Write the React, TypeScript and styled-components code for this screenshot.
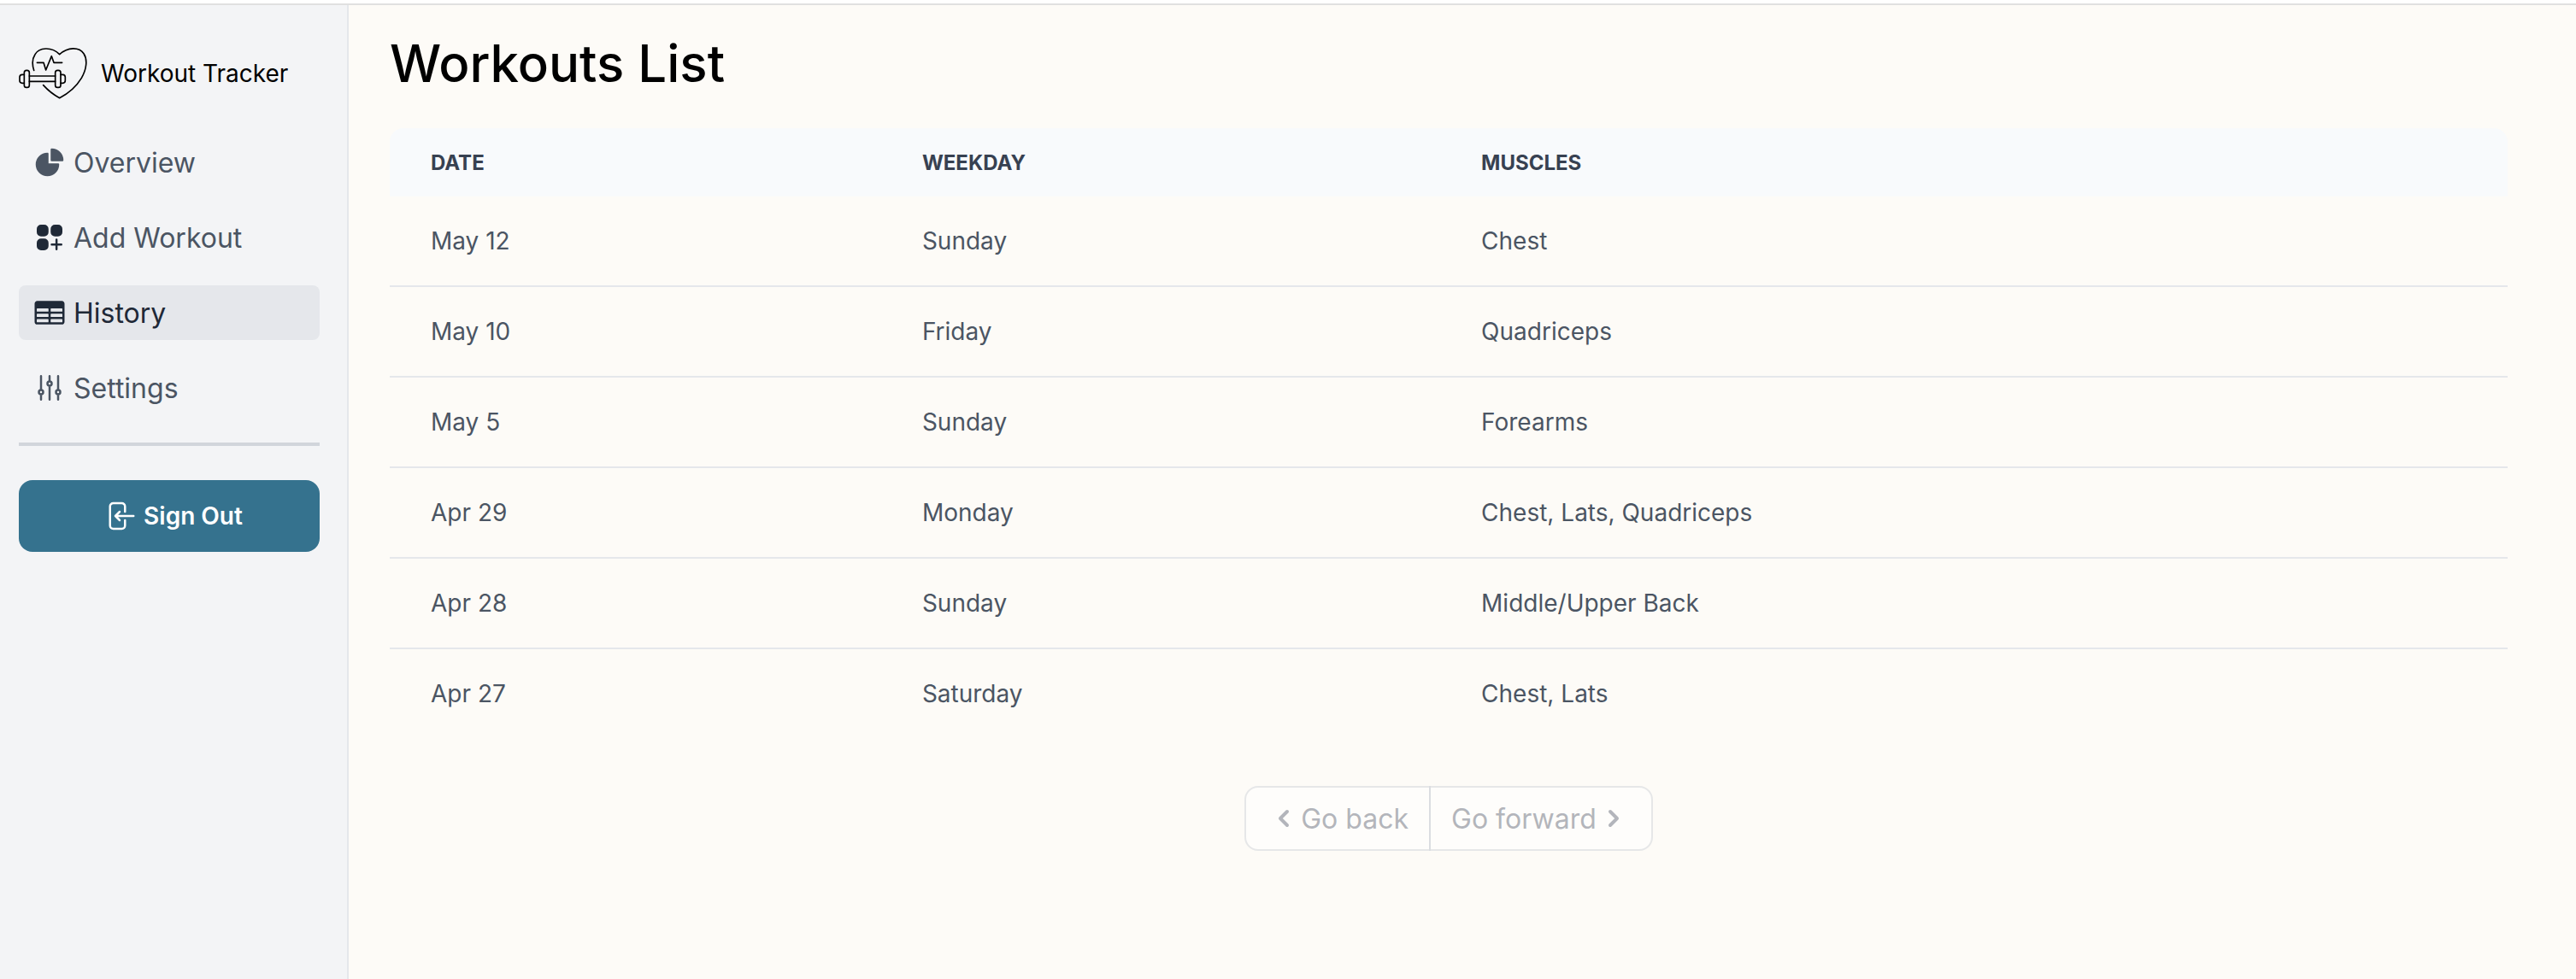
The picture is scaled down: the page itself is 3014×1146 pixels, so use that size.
import React from 'react';
import styled, { createGlobalStyle } from 'styled-components';
import { HiChevronLeft, HiChevronRight } from 'react-icons/hi';
import {
  HiChartPie,
  HiOutlineAdjustmentsVertical,
  HiOutlineArrowLeftOnRectangle,
  HiSquaresPlus,
  HiTableCells,
} from 'react-icons/hi2';

const GlobalStyle = createGlobalStyle`
  *, *::before, *::after { box-sizing: border-box; }
  body {
    margin: 0;
    background: #fdfbf7;
    font-family: Inter, 'Liberation Sans', sans-serif;
    color: #000;
  }
`;

const Page = styled.div`
  display: flex;
  flex-direction: column;
  min-height: 100vh;
`;

const TopBar = styled.header`
  height: 6px;
  background: #fff;
  border-bottom: 2px solid #e0e0e0;
`;

const Body = styled.div`
  display: flex;
  flex: 1;
`;

const Sidebar = styled.aside`
  flex: 0 0 408px;
  padding: 50px 32px 32px 22px;
  background: #f3f4f6;
  border-right: 2px solid #e5e7eb;
`;

const Brand = styled.a`
  display: flex;
  align-items: center;
  gap: 16px;
  height: 60px;
  margin-bottom: 42px;
  color: #000;
  font-size: 28px;
  text-decoration: none;
`;

const NavList = styled.ul`
  display: flex;
  flex-direction: column;
  gap: 24px;
  margin: 0;
  padding: 0;
  list-style: none;
`;

const NavLink = styled.a<{ $active?: boolean; $iconColor?: string }>`
  display: flex;
  align-items: center;
  gap: 8px;
  height: 64px;
  padding: 0 16px;
  border-radius: 8px;
  background: ${(p) => (p.$active ? '#e5e7eb' : 'transparent')};
  color: ${(p) => (p.$active ? '#1f2937' : '#4b5563')};
  font-size: 32px;
  text-decoration: none;

  svg {
    flex: none;
    width: 40px;
    height: 40px;
    color: ${(p) => p.$iconColor ?? 'inherit'};
  }
`;

const Divider = styled.hr`
  height: 4px;
  margin: 32px 0 40px;
  border: 0;
  background: #d1d5db;
`;

const SignOutButton = styled.button`
  display: flex;
  align-items: center;
  justify-content: center;
  width: 100%;
  height: 84px;
  padding: 0;
  border: 0;
  border-radius: 16px;
  background: #35728e;
  color: #fff;
  font: 600 28px Inter, 'Liberation Sans', sans-serif;
  cursor: pointer;

  svg {
    width: 40px;
    height: 40px;
    margin: 0 8px;
  }
`;

const Main = styled.main`
  flex: 1;
  min-width: 0;
  padding: 38px 80px 48px 48px;
`;

const Title = styled.h1`
  margin: 0 0 46px;
  font-size: 60px;
  font-weight: 500;
  line-height: 60px;
`;

const WorkoutTable = styled.table`
  width: 100%;
  table-layout: fixed;
  border-collapse: separate;
  border-spacing: 0;
  text-align: left;
`;

const HeadCell = styled.th<{ $share: number }>`
  width: ${(p) => p.$share}%;
  height: 80px;
  padding: 0 48px;
  background: #f8fafc;
  color: #374151;
  font-size: 24px;
  font-weight: 700;
  text-transform: uppercase;

  &:first-child { border-top-left-radius: 16px; }
  &:last-child { border-top-right-radius: 16px; }
`;

const Row = styled.tr`
  &:not(:last-child) td {
    height: 106px;
    border-bottom: 2px solid #e5e7eb;
  }
`;

const Cell = styled.td`
  height: 104px;
  padding: 0 48px;
  color: #4b5563;
  font-size: 28px;
`;

const Pagination = styled.nav`
  display: flex;
  justify-content: center;
  margin-top: 56px;
`;

const PageButton = styled.button`
  display: flex;
  align-items: center;
  height: 76px;
  padding: 0 24px;
  border: 2px solid #d1d5db;
  background: #fff;
  color: #6b7280;
  font: 400 32px Inter, 'Liberation Sans', sans-serif;
  opacity: 0.5;

  svg {
    width: 40px;
    height: 40px;
  }

  &:first-child { border-radius: 16px 0 0 16px; }
  &:last-child {
    margin-left: -2px;
    border-radius: 0 16px 16px 0;
  }
`;

const LogoIcon = () => (
  <svg
    width="80"
    height="60"
    viewBox="66 78 240 180"
    fill="none"
    stroke="#000"
    strokeWidth="5"
    strokeLinecap="round"
    strokeLinejoin="round"
    aria-hidden="true"
  >
    <path d="M119 157C113 138 113 116 123 101C137 77 180 72 209 101C238 75 277 74 294 98C308 119 304 153 286 184C269 212 242 237 209 254C188 243 169 228 152 209" />
    <path d="M130 130H153L161 156L181 107L189 130H218" />
    <rect x="85" y="157" width="18" height="60" rx="8" />
    <rect x="194" y="157" width="19" height="60" rx="8" />
    <path d="M103 177H194M103 196H194" />
    <path d="M85 172H78Q69 172 69 181V193Q69 202 78 202H85" />
    <path d="M213 172H220Q229 172 229 181V193Q229 202 220 202H213" />
  </svg>
);

const navItems = [
  { label: 'Overview', Icon: HiChartPie },
  { label: 'Add Workout', Icon: HiSquaresPlus, iconColor: '#1f2937' },
  { label: 'History', Icon: HiTableCells, active: true },
  { label: 'Settings', Icon: HiOutlineAdjustmentsVertical },
];

const columns = [
  { label: 'Date', share: 23.2 },
  { label: 'Weekday', share: 26.4 },
  { label: 'Muscles', share: 50.4 },
];

const workouts = [
  { date: 'May 12', weekday: 'Sunday', muscles: 'Chest' },
  { date: 'May 10', weekday: 'Friday', muscles: 'Quadriceps' },
  { date: 'May 5', weekday: 'Sunday', muscles: 'Forearms' },
  { date: 'Apr 29', weekday: 'Monday', muscles: 'Chest, Lats, Quadriceps' },
  { date: 'Apr 28', weekday: 'Sunday', muscles: 'Middle/Upper Back' },
  { date: 'Apr 27', weekday: 'Saturday', muscles: 'Chest, Lats' },
];

export default function App() {
  return (
    <Page>
      <GlobalStyle />
      <TopBar />
      <Body>
        <Sidebar>
          <Brand href="#">
            <LogoIcon />
            Workout Tracker
          </Brand>
          <nav>
            <NavList>
              {navItems.map(({ label, Icon, active, iconColor }) => (
                <li key={label}>
                  <NavLink
                    href="#"
                    $active={active}
                    $iconColor={iconColor}
                    aria-current={active ? 'page' : undefined}
                  >
                    <Icon />
                    {label}
                  </NavLink>
                </li>
              ))}
            </NavList>
          </nav>
          <Divider />
          <SignOutButton type="button">
            <HiOutlineArrowLeftOnRectangle />
            Sign Out
          </SignOutButton>
        </Sidebar>
        <Main>
          <Title>Workouts List</Title>
          <WorkoutTable>
            <thead>
              <tr>
                {columns.map((c) => (
                  <HeadCell key={c.label} scope="col" $share={c.share}>
                    {c.label}
                  </HeadCell>
                ))}
              </tr>
            </thead>
            <tbody>
              {workouts.map((w) => (
                <Row key={w.date}>
                  <Cell>{w.date}</Cell>
                  <Cell>{w.weekday}</Cell>
                  <Cell>{w.muscles}</Cell>
                </Row>
              ))}
            </tbody>
          </WorkoutTable>
          <Pagination aria-label="Pagination">
            <PageButton type="button" disabled>
              <HiChevronLeft />
              Go back
            </PageButton>
            <PageButton type="button" disabled>
              Go forward
              <HiChevronRight />
            </PageButton>
          </Pagination>
        </Main>
      </Body>
    </Page>
  );
}
